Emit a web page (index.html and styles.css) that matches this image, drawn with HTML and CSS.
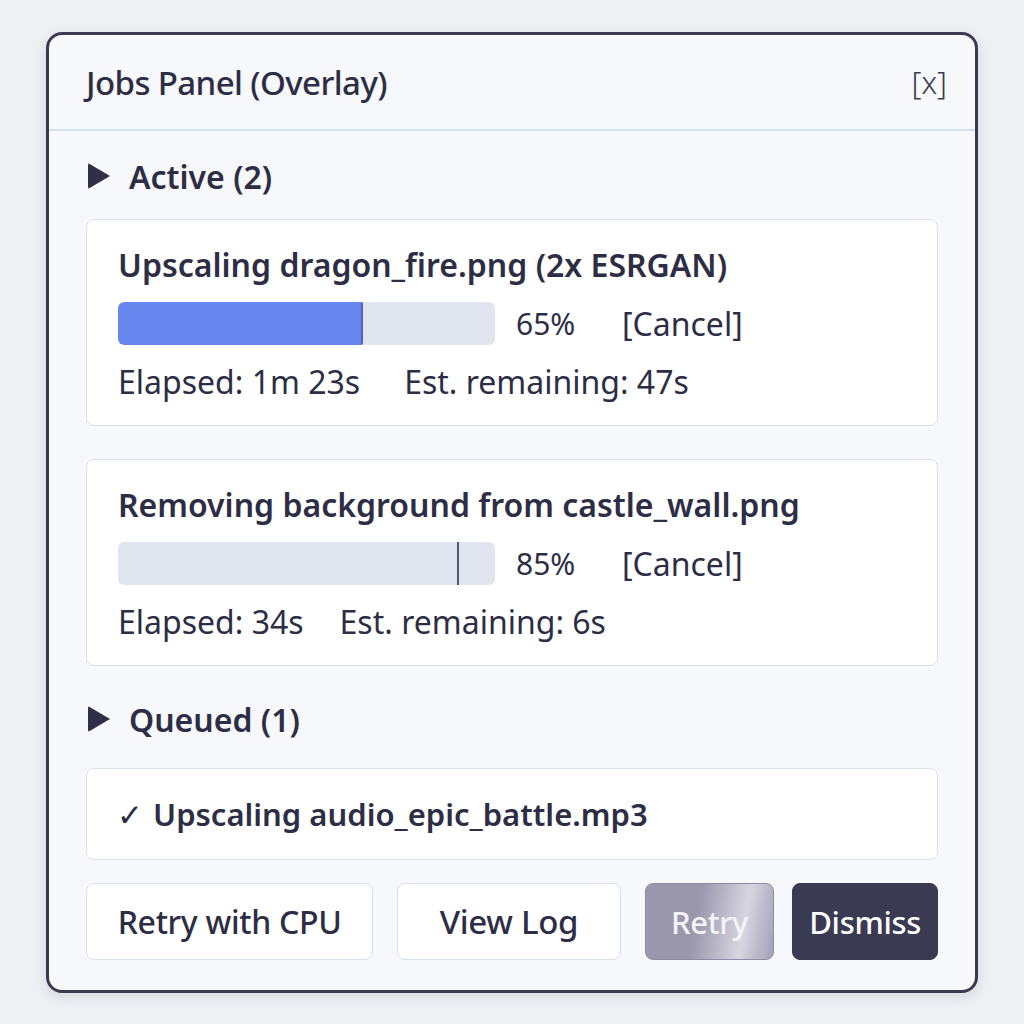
FILE: index.html
```html
<!DOCTYPE html>
<html>
<head>
<meta charset="utf-8">
<link rel="stylesheet" href="styles.css">
</head>
<body>
<div class="panel">
  <div class="header">
    <div class="title">Jobs Panel (Overlay)</div>
    <div class="close">[x]</div>
  </div>
  <div class="content">
    <div class="section"><span class="tri"></span><span>Active (2)</span></div>
    <div class="card job">
      <div class="job-title">Upscaling dragon_fire.png (2x ESRGAN)</div>
      <div class="prow">
        <div class="bar"><div class="fill" style="width:65%"></div></div>
        <span class="pct">65%</span>
        <span class="cancel">[Cancel]</span>
      </div>
      <div class="meta"><span>Elapsed: 1m 23s</span><span>Est. remaining: 47s</span></div>
    </div>
    <div class="card job">
      <div class="job-title">Removing background from castle_wall.png</div>
      <div class="prow">
        <div class="bar"><div class="marker" style="left:90%"></div></div>
        <span class="pct">85%</span>
        <span class="cancel">[Cancel]</span>
      </div>
      <div class="meta"><span>Elapsed: 34s</span><span>Est. remaining: 6s</span></div>
    </div>
    <div class="section q"><span class="tri"></span><span>Queued (1)</span></div>
    <div class="card queued"><span class="check">✓</span>Upscaling audio_epic_battle.mp3</div>
    <div class="actions">
      <button class="btn b1">Retry with CPU</button>
      <button class="btn b2">View Log</button>
      <button class="btn retry">Retry</button>
      <button class="btn dismiss">Dismiss</button>
    </div>
  </div>
</div>
</body>
</html>
```
FILE: styles.css
```css
* { box-sizing: border-box; }
html, body { margin: 0; }
body {
  width: 1024px; height: 1024px;
  background: #eff0f4;
  font-family: "Noto Sans", "Open Sans", sans-serif;
  color: #2d2e45;
  padding: 32px 46px 0 46px;
}
.panel {
  width: 932px;
  height: 961px;
  border: 3px solid #3a3b50;
  border-radius: 16px;
  background: #f7f8fb;
  box-shadow: 0 4px 14px rgba(40,40,70,0.12);
  overflow: hidden;
}
.header {
  height: 96px;
  border-bottom: 2px solid #d6e1ef;
  display: flex;
  align-items: center;
  justify-content: space-between;
  padding: 0 28px 0 37px;
}
.title { font-size: 33px; font-weight: 500; letter-spacing: -0.6px; }
.close { font-size: 31px; font-weight: 300; color: #3a3b50; }
.content { padding: 22px 37px 0 37px; }
.section {
  display: flex; align-items: center; gap: 19px;
  font-size: 32px; font-weight: 600; height: 46px;
  padding-left: 2px;
}
.tri {
  width: 0; height: 0;
  border-left: 22px solid #2f3048;
  border-top: 13px solid transparent;
  border-bottom: 13px solid transparent;
  border-radius: 2px;
}
.card {
  background: #fff;
  border: 1.5px solid #d8e0ee;
  border-radius: 8px;
}
.job { margin-top: 20px; padding: 22px 31px 24px 31px; height: 207px; }
.job + .job { margin-top: 33px; }
.job-title { font-size: 32px; font-weight: 600; line-height: 46px; height: 46px; }
.prow { display: flex; align-items: center; margin-top: 13px; height: 44px; }
.bar {
  position: relative;
  width: 377px; height: 43px;
  background: #e0e5ef;
  border-radius: 6px;
  overflow: hidden;
}
.fill { height: 100%; background: #6888f0; border-right: 2px solid #4c66c6; border-radius: 6px 2px 2px 6px; }
.marker { position: absolute; top: 0; bottom: 0; width: 2px; background: #55576a; }
.pct { font-size: 30px; margin-left: 21px; width: 106px; }
.cancel { font-size: 32px; }
.meta { font-size: 32px; margin-top: 16px; display: flex; gap: 44px; line-height: 42px; }
.job + .job .meta { gap: 36px; }
.section.q { margin-top: 30px; }
.queued {
  margin-top: 26px; height: 92px;
  display: flex; align-items: center;
  padding-left: 30px;
  font-size: 31px; font-weight: 600;
}
.check { font-weight: 400; margin-right: 10px; }
.actions { display: flex; margin-top: 23px; gap: 24px; }
.btn {
  height: 77px;
  font-family: inherit;
  font-size: 31px; font-weight: 500;
  color: #2d2e45;
  background: #fff;
  border: 1.5px solid #d8e0ee;
  border-radius: 8px;
  padding: 0;
  letter-spacing: -0.3px;
}
.b1 { width: 288px; font-size: 32px; }
.b2 { width: 224px; font-size: 33px; }
.retry {
  width: 130px;
  color: #f4f3f8;
  font-weight: 500;
  background: linear-gradient(100deg, #9b97ad 0%, #9a96ac 40%, #d7d6e0 75%, #a3a0b5 100%);
  border-color: #8f8ba3;
}
.dismiss {
  width: 146px; margin-left: -6px;
  background: #3a3a53;
  border-color: #3a3a53;
  color: #fff;
  font-weight: 500;
}
```
